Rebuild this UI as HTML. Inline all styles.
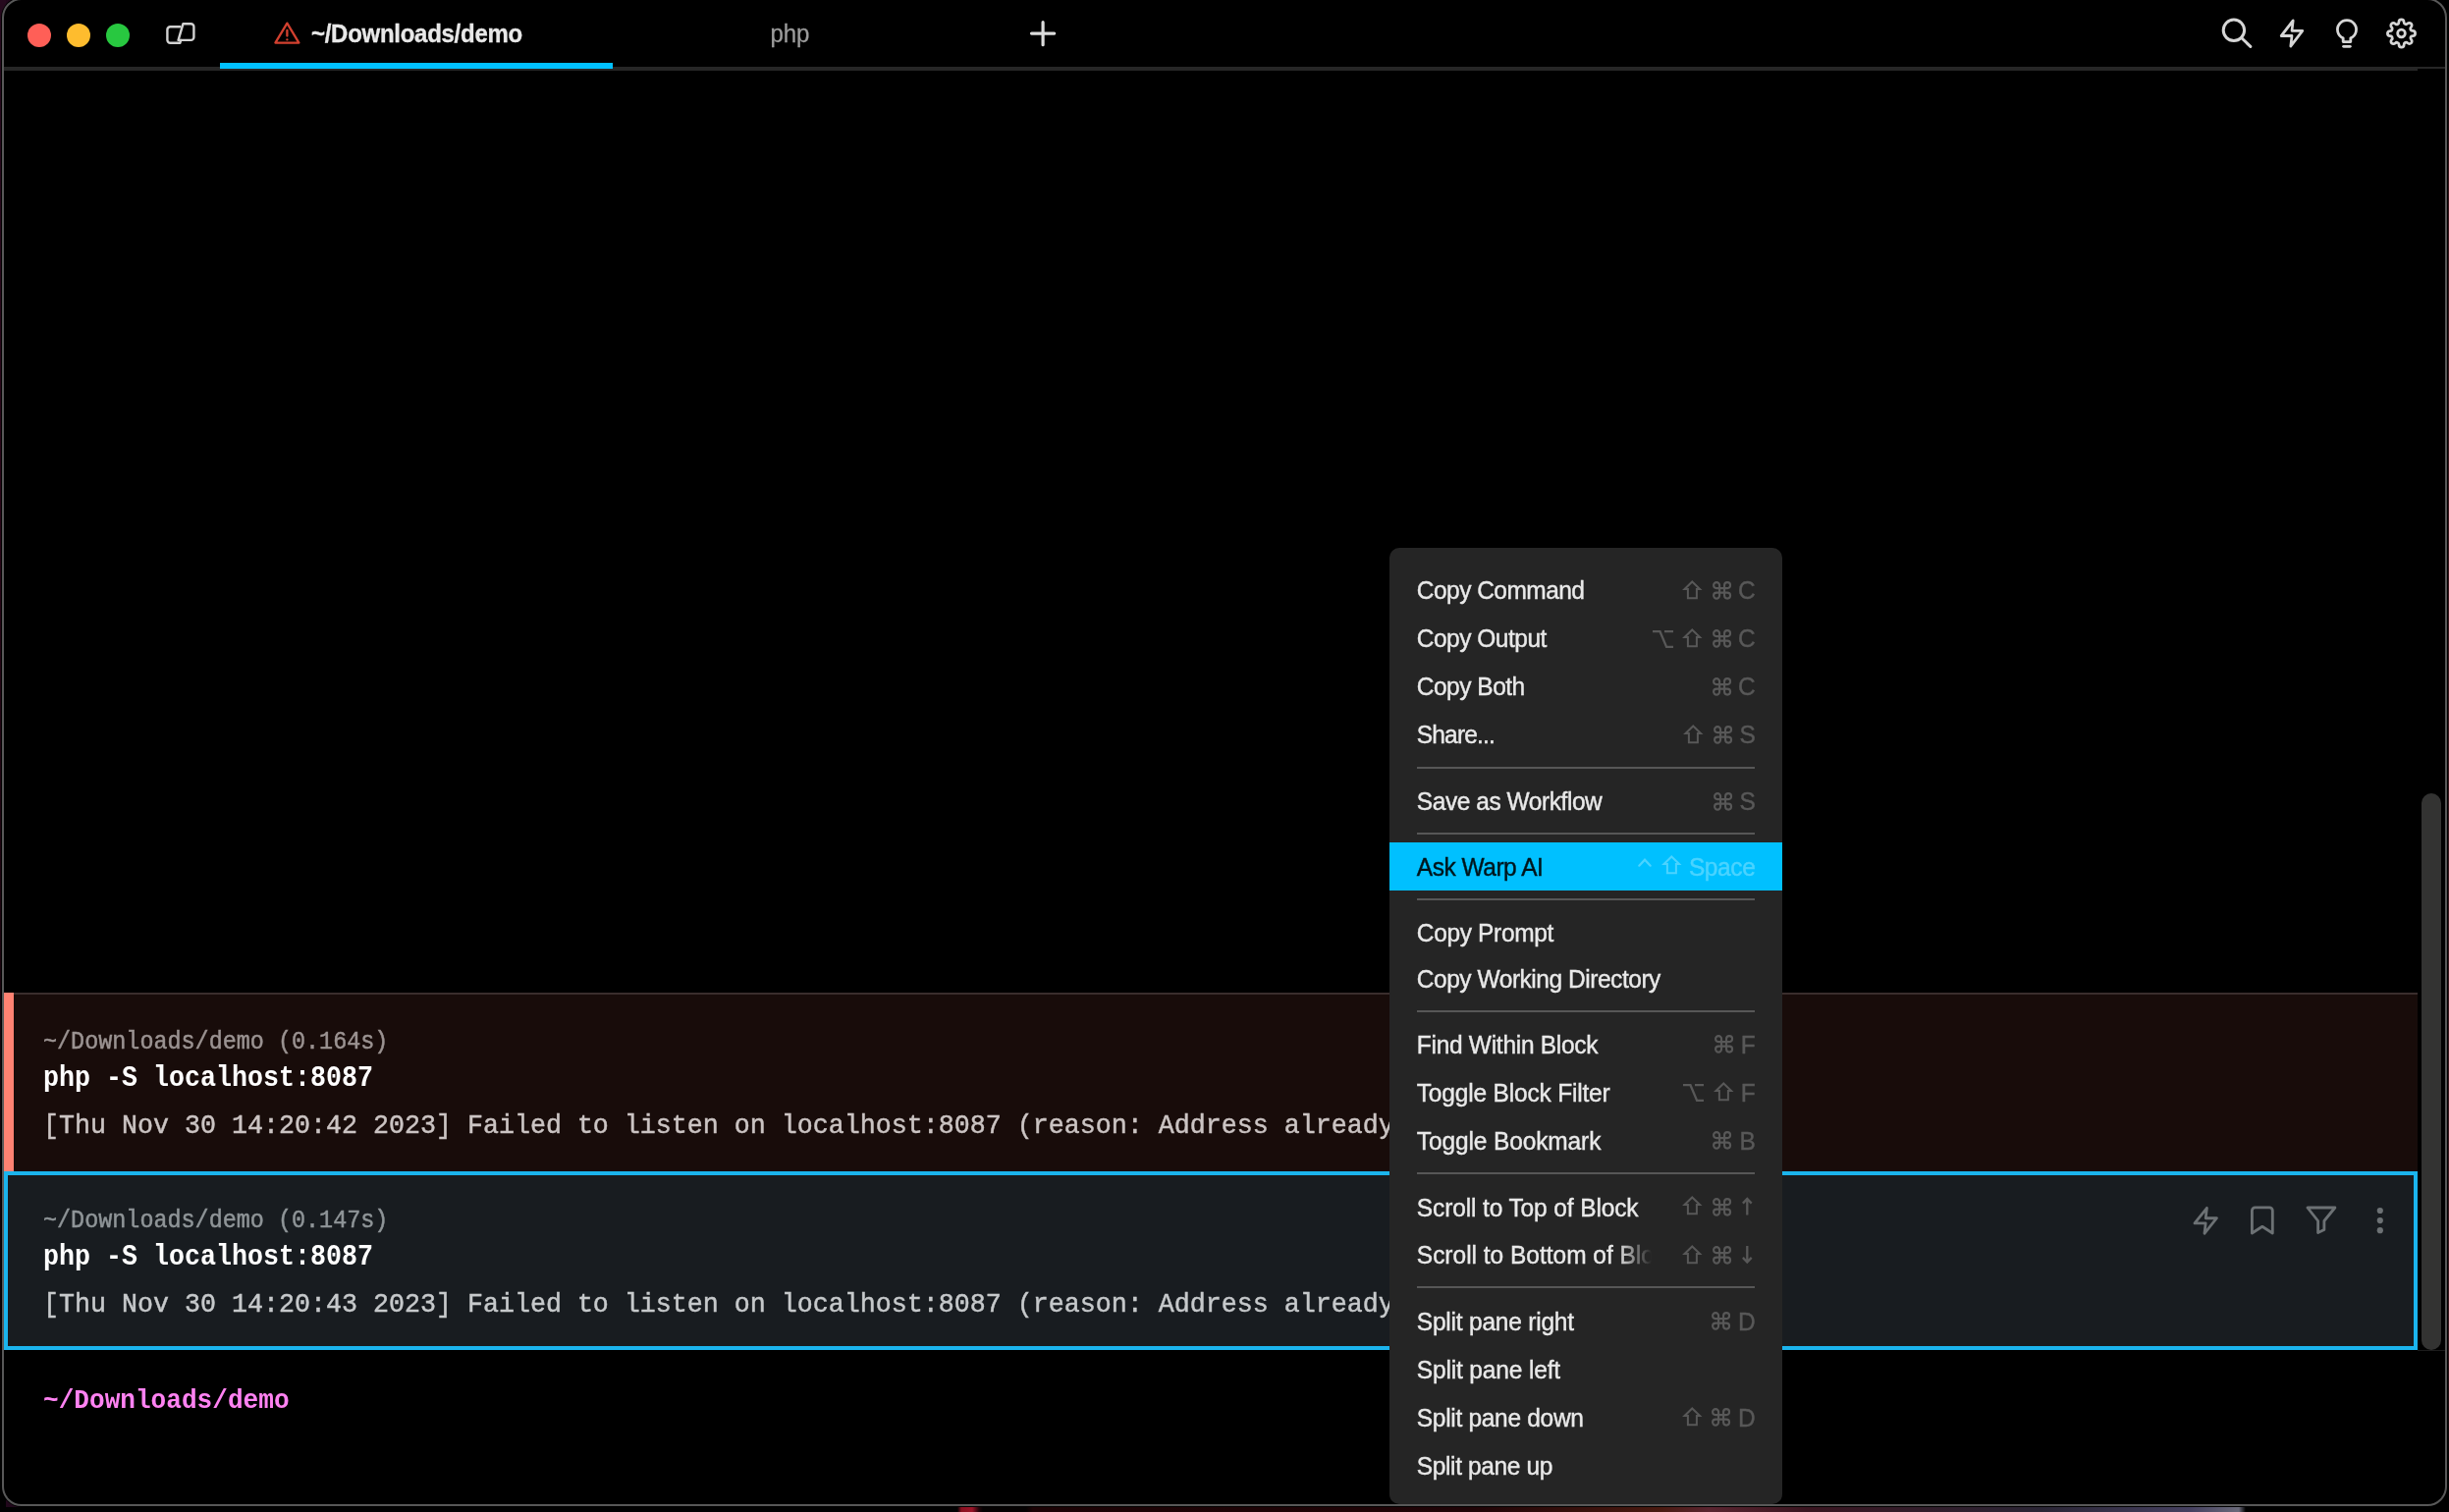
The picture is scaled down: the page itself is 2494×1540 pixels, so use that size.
<!DOCTYPE html>
<html>
<head>
<meta charset="utf-8">
<title>Warp</title>
<style>
*{box-sizing:border-box;margin:0;padding:0}
html,body{width:2494px;height:1540px;overflow:hidden}
body{position:relative;background:#000 linear-gradient(90deg,#22081c 0px,#1c0617 40px,#000 1400px);font-family:"Liberation Sans",sans-serif;color:#e8e8e8}
.abs{position:absolute}
#layer{left:0;top:0;width:2494px;height:1540px;will-change:transform}
#wall{left:0;top:1535px;width:2494px;height:5px;background:linear-gradient(90deg,#020202 0px,#020202 975px,#8a1020 979px,#9a1428 990px,#20040a 997px,#050202 1001px,#050202 1045px,#1c0305 1052px,#200407 1500px,#4a1a10 1690px,#5a2530 1740px,#3a1520 1840px,#2a2535 2080px,#454060 2230px,#6a6a7a 2280px,#000 2287px,#000 2494px)}
#wallr{left:2490px;top:60px;width:4px;height:1440px;background:linear-gradient(180deg,#000 0,#38151a 120px,#38151a 1300px,#000 1440px)}
#walll{left:0;top:0;width:6px;height:1540px;background:linear-gradient(180deg,#260a1e 0,#2a0618 500px,#16040c 1100px,#020202 1480px)}
#win{left:2px;top:-2px;width:2490px;height:1536px;border:2px solid #585858;border-radius:20px;background:#000;box-shadow:0 0 0 1px #000}
.tl{width:24px;height:24px;border-radius:50%;top:24px}
#tabline{left:4px;top:68px;width:2486px;height:2px;background:#262626}
#tabline2{left:4px;top:70px;width:2458px;height:2px;background:#262626}
#tabsel{left:224px;top:64px;width:400px;height:6px;background:#00c0ff}
.sans{font-family:"Liberation Sans",sans-serif;white-space:nowrap}
.mono{font-family:"Liberation Mono",monospace;white-space:pre}
svg{position:absolute;overflow:visible}
.ml{font-family:"Liberation Sans",sans-serif;white-space:nowrap;font-size:24.5px;line-height:30px;height:30px;letter-spacing:-0.4px;transform:scaleY(1.055);transform-origin:0 23.5px;-webkit-text-stroke:0.4px}
.l1{font-size:23.43px;line-height:34px;height:34px;transform:scaleY(1.08);transform-origin:0 23.25px;-webkit-text-stroke:0.45px}
.l2{font-size:26.667px;line-height:34px;height:34px;font-weight:bold;transform:scaleY(1.08);transform-origin:0 24.1px}
.l3{font-size:26.667px;line-height:34px;height:34px;transform:scaleY(1.06);transform-origin:0 24.1px;-webkit-text-stroke:0.45px}
</style>
</head>
<body>
<div id="wallr" class="abs"></div>
<div id="walll" class="abs"></div>
<div id="wall" class="abs"></div>
<div id="win" class="abs"></div>

<div id="layer" class="abs">
<!-- traffic lights -->
<div class="abs tl" style="left:28px;background:#ff5f57"></div>
<div class="abs tl" style="left:68px;background:#febc2e"></div>
<div class="abs tl" style="left:108px;background:#28c840"></div>

<div id="tabline" class="abs"></div>
<div id="tabline2" class="abs"></div>
<div id="tabsel" class="abs"></div>


<!-- title bar icons -->
<svg class="abs" style="left:0;top:0" width="2494" height="80" viewBox="0 0 2494 80" fill="none" stroke-linecap="round" stroke-linejoin="round">
  <!-- panel icon -->
  <g stroke="#d2d2d2" stroke-width="2.4">
    <path d="M183.4 27.3 H173.4 a3 3 0 0 0 -3 3 V40.8 a3 3 0 0 0 3 3 H183.4 L184.2 40.9"/>
    <path d="M186.4 24.3 H194.4 a3 3 0 0 1 3 3 V37.9 a3 3 0 0 1 -3 3 H181.6 Z"/>
  </g>
  <!-- warning -->
  <g stroke="#d2402f" stroke-width="2.3">
    <path d="M292.4 23.6 L304.4 43.6 H280.4 Z"/>
    <path d="M292.4 31 V36.6"/>
    <path d="M292.4 40.3 V40.4"/>
  </g>
  <!-- plus -->
  <path d="M1062.1 22.7 V45.7 M1050.5 34.1 H1073.7" stroke="#dcdcdc" stroke-width="3.2"/>
  <!-- search -->
  <g stroke="#d6d6d6" stroke-width="3">
    <circle cx="2274.9" cy="30.8" r="10.7"/>
    <path d="M2282.6 38.5 L2291.8 47.4"/>
  </g>
  <!-- bolt -->
  <path transform="translate(2319.6 18.35) scale(1.2 1.3)" d="M13 2 L3 14 H12 L11 22 L21 10 H12 Z" stroke="#d6d6d6" stroke-width="2.25"/>
  <!-- bulb -->
  <g stroke="#d6d6d6" stroke-width="2.8">
    <path d="M2386.2 42.6 V38.9 A9.55 9.55 0 1 1 2393.8 38.9 V42.6 Z"/>
    <path d="M2386.6 47.3 H2393.3"/>
  </g>
  <!-- gear -->
  <g transform="translate(2430.14 18.64) scale(1.28)" stroke="#d6d6d6" stroke-width="2.15">
    <circle cx="12" cy="12" r="3"/>
    <path d="M19.4 15a1.65 1.65 0 0 0 .33 1.82l.06.06a2 2 0 0 1 0 2.83 2 2 0 0 1-2.83 0l-.06-.06a1.65 1.65 0 0 0-1.82-.33 1.65 1.65 0 0 0-1 1.51V21a2 2 0 0 1-2 2 2 2 0 0 1-2-2v-.09A1.65 1.65 0 0 0 9 19.4a1.65 1.65 0 0 0-1.82.33l-.06.06a2 2 0 0 1-2.83 0 2 2 0 0 1 0-2.83l.06-.06a1.65 1.65 0 0 0 .33-1.82 1.65 1.65 0 0 0-1.51-1H3a2 2 0 0 1-2-2 2 2 0 0 1 2-2h.09A1.65 1.65 0 0 0 4.6 9a1.65 1.65 0 0 0-.33-1.82l-.06-.06a2 2 0 0 1 0-2.83 2 2 0 0 1 2.83 0l.06.06a1.65 1.65 0 0 0 1.82.33H9a1.65 1.65 0 0 0 1-1.51V3a2 2 0 0 1 2-2 2 2 0 0 1 2 2v.09a1.65 1.65 0 0 0 1 1.51 1.65 1.65 0 0 0 1.82-.33l.06-.06a2 2 0 0 1 2.83 0 2 2 0 0 1 0 2.83l-.06.06a1.65 1.65 0 0 0-.33 1.82V9a1.65 1.65 0 0 0 1.51 1H21a2 2 0 0 1 2 2 2 2 0 0 1-2 2h-.09a1.65 1.65 0 0 0-1.51 1z"/>
  </g>
</svg>
<div class="abs sans" id="tab1" style="left:317px;top:20px;height:30px;line-height:30px;font-size:24px;font-weight:bold;-webkit-text-stroke:0.3px #e8e8e8;letter-spacing:-0.28px;color:#e8e8e8;transform:scaleY(1.085);transform-origin:0 24px">~/Downloads/demo</div>
<div class="abs sans" id="tab2" style="left:784.6px;top:20.3px;height:30px;line-height:30px;font-size:24px;letter-spacing:-0.2px;color:#9c9c9c;-webkit-text-stroke:0.3px #9c9c9c;transform:scaleY(1.04);transform-origin:0 24px">php</div>

<!--TABS-->

<!-- block 1 (error) -->
<div class="abs" style="left:4px;top:1011px;width:2458px;height:182px;background:#180c0a;border-top:2px solid #3a2e2d"></div>
<div class="abs" style="left:4px;top:1011px;width:10px;height:182px;background:#ff8272"></div>
<!-- block 2 (selected) -->
<div class="abs" style="left:4px;top:1193px;width:2458px;height:182px;background:#181c20;border:4px solid #1bb4ed"></div>
<!-- scrollbar -->
<div class="abs" style="left:2466px;top:808px;width:20px;height:567px;border-radius:10px;background:#333332"></div>
<div class="abs" style="left:2462px;top:1375px;width:28px;height:1px;background:#1c1c1c"></div>

<div class="abs mono l1" style="left:44px;top:1044.5px;color:#9b9392">~/Downloads/demo (0.164s)</div>
<div class="abs mono l2" style="left:44px;top:1082.2px;color:#ffffff">php -S localhost:8087</div>
<div class="abs mono l3" style="left:44px;top:1129.5px;color:#cbc4c3">[Thu Nov 30 14:20:42 2023] Failed to listen on localhost:8087 (reason: Address already in use)</div>

<div class="abs mono l1" style="left:44px;top:1226.5px;color:#8f9598">~/Downloads/demo (0.147s)</div>
<div class="abs mono l2" style="left:44px;top:1264.2px;color:#ffffff">php -S localhost:8087</div>
<div class="abs mono l3" style="left:44px;top:1311.5px;color:#c6c9cb">[Thu Nov 30 14:20:43 2023] Failed to listen on localhost:8087 (reason: Address already in use)</div>

<div class="abs mono l2" style="left:44px;top:1409.9px;font-size:26.1px;color:#ff82f2">~/Downloads/demo</div>

<!-- block icons -->
<svg class="abs" style="left:2200px;top:1200px" width="260" height="90" viewBox="2200 1200 260 90" fill="none" stroke="#6c7174" stroke-width="2.8" stroke-linecap="round" stroke-linejoin="round">
  <path transform="translate(2231.2 1227.7) scale(1.25 1.3)" d="M13 2 L3 14 H12 L11 22 L21 10 H12 Z" stroke-width="2.2"/>
  <path d="M2293.4 1256 V1233 a3.2 3.2 0 0 1 3.2 -3.2 H2311.1 a3.2 3.2 0 0 1 3.2 3.2 V1256 L2303.85 1249.3 Z"/>
  <path d="M2349.9 1230 H2377.9 L2366.9 1243.5 V1252.5 L2360.6 1255.5 V1243.5 Z"/>
  <g fill="#6c7174" stroke="none"><circle cx="2423.8" cy="1233" r="3.1"/><circle cx="2423.8" cy="1243.1" r="3.1"/><circle cx="2423.8" cy="1253.2" r="3.1"/></g>
</svg>

<!--BLOCKS-->
<!--MENU-START-->
<div class="abs" id="menu" style="left:1415px;top:558px;width:400px;height:974px;border-radius:10px;background:#252525"></div>
<div class="abs ml" style="left:1442.8px;top:586.85px;letter-spacing:-0.53px;color:#e9e9e9">Copy Command</div>
<div class="abs ml" style="left:1687.40px;width:100px;text-align:right;top:586.85px;color:#585858">C</div>
<svg class="abs" style="left:1743.60px;top:591.85px" width="19.2" height="18.7" viewBox="0 0 19.2 18.7" fill="none" stroke="#585858"><path d="M7.1 7.1 H12.1 V11.6 H7.1 Z M7.1 7.1 V4.1 a3 3 0 1 0 -3 3 Z M12.1 7.1 V4.1 a3 3 0 1 1 3 3 Z M7.1 11.6 V14.6 a3 3 0 1 1 -3 -3 Z M12.1 11.6 V14.6 a3 3 0 1 0 3 -3 Z" stroke-width="2.1" stroke-linejoin="round"/></svg>
<svg class="abs" style="left:1713.30px;top:590.75px" width="20.6" height="19.2" viewBox="0 0 20.6 19.2" fill="none" stroke="#585858"><path d="M10.3 1.45 L18.1 9.1 H14.9 V18.2 H5.9 V9.1 H2.5 Z" stroke-width="2" stroke-linejoin="miter"/></svg>
<div class="abs ml" style="left:1442.8px;top:635.85px;letter-spacing:-0.5px;color:#e9e9e9">Copy Output</div>
<div class="abs ml" style="left:1687.40px;width:100px;text-align:right;top:635.85px;color:#585858">C</div>
<svg class="abs" style="left:1743.60px;top:640.85px" width="19.2" height="18.7" viewBox="0 0 19.2 18.7" fill="none" stroke="#585858"><path d="M7.1 7.1 H12.1 V11.6 H7.1 Z M7.1 7.1 V4.1 a3 3 0 1 0 -3 3 Z M12.1 7.1 V4.1 a3 3 0 1 1 3 3 Z M7.1 11.6 V14.6 a3 3 0 1 1 -3 -3 Z M12.1 11.6 V14.6 a3 3 0 1 0 3 -3 Z" stroke-width="2.1" stroke-linejoin="round"/></svg>
<svg class="abs" style="left:1713.30px;top:639.75px" width="20.6" height="19.2" viewBox="0 0 20.6 19.2" fill="none" stroke="#585858"><path d="M10.3 1.45 L18.1 9.1 H14.9 V18.2 H5.9 V9.1 H2.5 Z" stroke-width="2" stroke-linejoin="miter"/></svg>
<svg class="abs" style="left:1682.60px;top:641.65px" width="21.0" height="18.0" viewBox="0 0 21.0 18.0" fill="none" stroke="#585858"><path d="M0 1.2 H7.5 L14.1 16.85 H21 M12 1.2 H21" stroke-width="2.3" stroke-linejoin="miter"/></svg>
<div class="abs ml" style="left:1442.8px;top:684.85px;letter-spacing:-0.5px;color:#e9e9e9">Copy Both</div>
<div class="abs ml" style="left:1687.40px;width:100px;text-align:right;top:684.85px;color:#585858">C</div>
<svg class="abs" style="left:1743.60px;top:689.85px" width="19.2" height="18.7" viewBox="0 0 19.2 18.7" fill="none" stroke="#585858"><path d="M7.1 7.1 H12.1 V11.6 H7.1 Z M7.1 7.1 V4.1 a3 3 0 1 0 -3 3 Z M12.1 7.1 V4.1 a3 3 0 1 1 3 3 Z M7.1 11.6 V14.6 a3 3 0 1 1 -3 -3 Z M12.1 11.6 V14.6 a3 3 0 1 0 3 -3 Z" stroke-width="2.1" stroke-linejoin="round"/></svg>
<div class="abs ml" style="left:1442.8px;top:733.85px;letter-spacing:-0.82px;color:#e9e9e9">Share...</div>
<div class="abs ml" style="left:1687.40px;width:100px;text-align:right;top:733.85px;color:#585858">S</div>
<svg class="abs" style="left:1744.50px;top:738.85px" width="19.2" height="18.7" viewBox="0 0 19.2 18.7" fill="none" stroke="#585858"><path d="M7.1 7.1 H12.1 V11.6 H7.1 Z M7.1 7.1 V4.1 a3 3 0 1 0 -3 3 Z M12.1 7.1 V4.1 a3 3 0 1 1 3 3 Z M7.1 11.6 V14.6 a3 3 0 1 1 -3 -3 Z M12.1 11.6 V14.6 a3 3 0 1 0 3 -3 Z" stroke-width="2.1" stroke-linejoin="round"/></svg>
<svg class="abs" style="left:1714.20px;top:737.75px" width="20.6" height="19.2" viewBox="0 0 20.6 19.2" fill="none" stroke="#585858"><path d="M10.3 1.45 L18.1 9.1 H14.9 V18.2 H5.9 V9.1 H2.5 Z" stroke-width="2" stroke-linejoin="miter"/></svg>
<div class="abs" style="left:1443px;top:781.0px;width:344px;height:2px;background:#575757"></div>
<div class="abs ml" style="left:1442.8px;top:802.25px;letter-spacing:-0.44px;color:#e9e9e9">Save as Workflow</div>
<div class="abs ml" style="left:1687.40px;width:100px;text-align:right;top:802.25px;color:#585858">S</div>
<svg class="abs" style="left:1744.50px;top:806.75px" width="19.2" height="18.7" viewBox="0 0 19.2 18.7" fill="none" stroke="#585858"><path d="M7.1 7.1 H12.1 V11.6 H7.1 Z M7.1 7.1 V4.1 a3 3 0 1 0 -3 3 Z M12.1 7.1 V4.1 a3 3 0 1 1 3 3 Z M7.1 11.6 V14.6 a3 3 0 1 1 -3 -3 Z M12.1 11.6 V14.6 a3 3 0 1 0 3 -3 Z" stroke-width="2.1" stroke-linejoin="round"/></svg>
<div class="abs" style="left:1443px;top:848.0px;width:344px;height:2px;background:#575757"></div>
<div class="abs" style="left:1415px;top:858px;width:400px;height:49px;background:#00c0ff"></div>
<div class="abs ml" style="left:1442.8px;top:868.95px;letter-spacing:-0.48px;color:#00151c">Ask Warp AI</div>
<div class="abs ml" style="left:1687.40px;width:100px;text-align:right;top:868.95px;color:#4bd3ff">Space</div>
<svg class="abs" style="left:1692.10px;top:871.45px" width="20.6" height="19.2" viewBox="0 0 20.6 19.2" fill="none" stroke="#4bd3ff"><path d="M10.3 1.45 L18.1 9.1 H14.9 V18.2 H5.9 V9.1 H2.5 Z" stroke-width="2" stroke-linejoin="miter"/></svg>
<svg class="abs" style="left:1668.40px;top:873.55px" width="14.0" height="8.8" viewBox="0 0 14.0 8.8" fill="none" stroke="#4bd3ff"><path d="M1.3 7.7 L7 1.7 L12.7 7.7" stroke-width="2.2" stroke-linecap="round" stroke-linejoin="miter"/></svg>
<div class="abs" style="left:1443px;top:915.0px;width:344px;height:2px;background:#575757"></div>
<div class="abs ml" style="left:1442.8px;top:935.55px;letter-spacing:-0.34px;color:#e9e9e9">Copy Prompt</div>
<div class="abs ml" style="left:1442.8px;top:983.25px;letter-spacing:-0.46px;color:#e9e9e9">Copy Working Directory</div>
<div class="abs" style="left:1443px;top:1029.0px;width:344px;height:2px;background:#575757"></div>
<div class="abs ml" style="left:1442.8px;top:1050.45px;letter-spacing:-0.28px;color:#e9e9e9">Find Within Block</div>
<div class="abs ml" style="left:1687.40px;width:100px;text-align:right;top:1050.45px;color:#585858">F</div>
<svg class="abs" style="left:1746.20px;top:1054.45px" width="19.2" height="18.7" viewBox="0 0 19.2 18.7" fill="none" stroke="#585858"><path d="M7.1 7.1 H12.1 V11.6 H7.1 Z M7.1 7.1 V4.1 a3 3 0 1 0 -3 3 Z M12.1 7.1 V4.1 a3 3 0 1 1 3 3 Z M7.1 11.6 V14.6 a3 3 0 1 1 -3 -3 Z M12.1 11.6 V14.6 a3 3 0 1 0 3 -3 Z" stroke-width="2.1" stroke-linejoin="round"/></svg>
<div class="abs ml" style="left:1442.8px;top:1099.35px;letter-spacing:-0.18px;color:#e9e9e9">Toggle Block Filter</div>
<div class="abs ml" style="left:1687.40px;width:100px;text-align:right;top:1099.35px;color:#585858">F</div>
<svg class="abs" style="left:1744.80px;top:1102.25px" width="20.6" height="19.2" viewBox="0 0 20.6 19.2" fill="none" stroke="#585858"><path d="M10.3 1.45 L18.1 9.1 H14.9 V18.2 H5.9 V9.1 H2.5 Z" stroke-width="2" stroke-linejoin="miter"/></svg>
<svg class="abs" style="left:1714.10px;top:1104.15px" width="21.0" height="18.0" viewBox="0 0 21.0 18.0" fill="none" stroke="#585858"><path d="M0 1.2 H7.5 L14.1 16.85 H21 M12 1.2 H21" stroke-width="2.3" stroke-linejoin="miter"/></svg>
<div class="abs ml" style="left:1442.8px;top:1148.35px;letter-spacing:-0.12px;color:#e9e9e9">Toggle Bookmark</div>
<div class="abs ml" style="left:1687.40px;width:100px;text-align:right;top:1148.35px;color:#585858">B</div>
<svg class="abs" style="left:1744.40px;top:1152.35px" width="19.2" height="18.7" viewBox="0 0 19.2 18.7" fill="none" stroke="#585858"><path d="M7.1 7.1 H12.1 V11.6 H7.1 Z M7.1 7.1 V4.1 a3 3 0 1 0 -3 3 Z M12.1 7.1 V4.1 a3 3 0 1 1 3 3 Z M7.1 11.6 V14.6 a3 3 0 1 1 -3 -3 Z M12.1 11.6 V14.6 a3 3 0 1 0 3 -3 Z" stroke-width="2.1" stroke-linejoin="round"/></svg>
<div class="abs" style="left:1443px;top:1194.0px;width:344px;height:2px;background:#575757"></div>
<div class="abs ml" style="left:1442.8px;top:1215.55px;letter-spacing:-0.12px;color:#e9e9e9">Scroll to Top of Block</div>
<svg class="abs" style="left:1774.30px;top:1219.45px" width="10.6" height="18.5" viewBox="0 0 10.6 18.5" fill="none" stroke="#585858"><path d="M5.3 18.5 V1.9 M0.9 6.6 L5.3 1.9 L9.7 6.6" stroke-width="2.3" stroke-linejoin="miter"/></svg>
<svg class="abs" style="left:1743.70px;top:1219.55px" width="19.2" height="18.7" viewBox="0 0 19.2 18.7" fill="none" stroke="#585858"><path d="M7.1 7.1 H12.1 V11.6 H7.1 Z M7.1 7.1 V4.1 a3 3 0 1 0 -3 3 Z M12.1 7.1 V4.1 a3 3 0 1 1 3 3 Z M7.1 11.6 V14.6 a3 3 0 1 1 -3 -3 Z M12.1 11.6 V14.6 a3 3 0 1 0 3 -3 Z" stroke-width="2.1" stroke-linejoin="round"/></svg>
<svg class="abs" style="left:1713.40px;top:1218.45px" width="20.6" height="19.2" viewBox="0 0 20.6 19.2" fill="none" stroke="#585858"><path d="M10.3 1.45 L18.1 9.1 H14.9 V18.2 H5.9 V9.1 H2.5 Z" stroke-width="2" stroke-linejoin="miter"/></svg>
<div class="abs ml" style="left:1442.8px;top:1264.15px;letter-spacing:-0.01px;color:#e9e9e9;width:239px;overflow:hidden;-webkit-mask-image:linear-gradient(90deg,#000 0,#000 204px,transparent 239px);mask-image:linear-gradient(90deg,#000 0,#000 204px,transparent 239px)">Scroll to Bottom of Block</div>
<svg class="abs" style="left:1774.30px;top:1269.05px" width="10.6" height="18.5" viewBox="0 0 10.6 18.5" fill="none" stroke="#585858"><path d="M5.3 0 V16.6 M0.9 11.9 L5.3 16.6 L9.7 11.9" stroke-width="2.3" stroke-linejoin="miter"/></svg>
<svg class="abs" style="left:1743.70px;top:1269.15px" width="19.2" height="18.7" viewBox="0 0 19.2 18.7" fill="none" stroke="#585858"><path d="M7.1 7.1 H12.1 V11.6 H7.1 Z M7.1 7.1 V4.1 a3 3 0 1 0 -3 3 Z M12.1 7.1 V4.1 a3 3 0 1 1 3 3 Z M7.1 11.6 V14.6 a3 3 0 1 1 -3 -3 Z M12.1 11.6 V14.6 a3 3 0 1 0 3 -3 Z" stroke-width="2.1" stroke-linejoin="round"/></svg>
<svg class="abs" style="left:1713.40px;top:1268.05px" width="20.6" height="19.2" viewBox="0 0 20.6 19.2" fill="none" stroke="#585858"><path d="M10.3 1.45 L18.1 9.1 H14.9 V18.2 H5.9 V9.1 H2.5 Z" stroke-width="2" stroke-linejoin="miter"/></svg>
<div class="abs" style="left:1443px;top:1310.0px;width:344px;height:2px;background:#575757"></div>
<div class="abs ml" style="left:1442.8px;top:1331.65px;letter-spacing:-0.21px;color:#e9e9e9">Split pane right</div>
<div class="abs ml" style="left:1687.40px;width:100px;text-align:right;top:1331.65px;color:#585858">D</div>
<svg class="abs" style="left:1743.40px;top:1335.65px" width="19.2" height="18.7" viewBox="0 0 19.2 18.7" fill="none" stroke="#585858"><path d="M7.1 7.1 H12.1 V11.6 H7.1 Z M7.1 7.1 V4.1 a3 3 0 1 0 -3 3 Z M12.1 7.1 V4.1 a3 3 0 1 1 3 3 Z M7.1 11.6 V14.6 a3 3 0 1 1 -3 -3 Z M12.1 11.6 V14.6 a3 3 0 1 0 3 -3 Z" stroke-width="2.1" stroke-linejoin="round"/></svg>
<div class="abs ml" style="left:1442.8px;top:1380.85px;letter-spacing:-0.15px;color:#e9e9e9">Split pane left</div>
<div class="abs ml" style="left:1442.8px;top:1430.35px;letter-spacing:-0.3px;color:#e9e9e9">Split pane down</div>
<div class="abs ml" style="left:1687.40px;width:100px;text-align:right;top:1430.35px;color:#585858">D</div>
<svg class="abs" style="left:1743.40px;top:1434.35px" width="19.2" height="18.7" viewBox="0 0 19.2 18.7" fill="none" stroke="#585858"><path d="M7.1 7.1 H12.1 V11.6 H7.1 Z M7.1 7.1 V4.1 a3 3 0 1 0 -3 3 Z M12.1 7.1 V4.1 a3 3 0 1 1 3 3 Z M7.1 11.6 V14.6 a3 3 0 1 1 -3 -3 Z M12.1 11.6 V14.6 a3 3 0 1 0 3 -3 Z" stroke-width="2.1" stroke-linejoin="round"/></svg>
<svg class="abs" style="left:1713.10px;top:1433.25px" width="20.6" height="19.2" viewBox="0 0 20.6 19.2" fill="none" stroke="#585858"><path d="M10.3 1.45 L18.1 9.1 H14.9 V18.2 H5.9 V9.1 H2.5 Z" stroke-width="2" stroke-linejoin="miter"/></svg>
<div class="abs ml" style="left:1442.8px;top:1479.45px;letter-spacing:-0.37px;color:#e9e9e9">Split pane up</div>
<!--MENU-END-->
</div>
</body>
</html>
